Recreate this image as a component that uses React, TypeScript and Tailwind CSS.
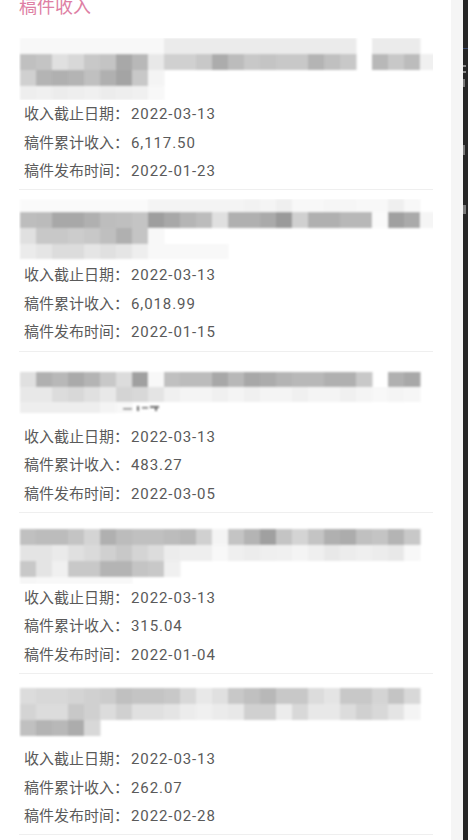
import React from 'react'

type MosaicRow = { y: number; h: number; c: string }

interface ArticleIncome {
    id: number
    mosaic: MosaicRow[]
    marks?: { x: number; y: number; w: number; h: number }[]
    deadline: string
    total: string
    published: string
}

const articles: ArticleIncome[] = [
    {
        id: 1,
        mosaic: [
            { y: 0, h: 16, c: 'f8 f8 f8 f8 f8 f8 f8 f8 f8 eb eb eb eb eb eb eb eb eb eb eb eb -- eb eb eb' },
            { y: 16, h: 16, c: 'c0 c4 e0 d8 c8 c4 a8 b8 e8 d0 d0 c8 ac bc c8 c4 c8 c8 b4 c0 c8 -- b8 c8 bc f0' },
            { y: 32, h: 16, c: 'd0 b4 b0 b4 c0 b0 a4 c8 f4' },
            { y: 48, h: 14, c: 'ee f0 ec ee f0 ec ee f0 f8' },
        ],
        deadline: '2022-03-13',
        total: '6,117.50',
        published: '2022-01-23',
    },
    {
        id: 2,
        mosaic: [
            { y: 0, h: 13, c: 'fa fa fa fa fa fa fa fa f4 f4 f4 f4 f4 f4 f2 f4 ef f8 f8 f6 f6 f8 f8 ef f8' },
            { y: 13, h: 16, c: 'bd bb a8 a8 b0 bd bf c4 9e a8 b5 bc e0 b0 b0 aa 9a d0 b0 b0 b8 b8 fa a0 aa f5' },
            { y: 29, h: 16, c: 'e0 c8 c8 cc c8 bf b0 c4 f8' },
            { y: 45, h: 15, c: 'eb e5 dc dc e5 e0 e5 ee f8 f8 f8 f8 f8' },
        ],
        deadline: '2022-03-13',
        total: '6,018.99',
        published: '2022-01-15',
    },
    {
        id: 3,
        mosaic: [
            { y: 11, h: 15, c: 'e0 b0 b8 aa b4 c8 dc a0 f8 c0 bc bc a8 b8 a8 ac b4 b8 b8 b0 b0 c8 -- b0 a8' },
            { y: 26, h: 15, c: 'e8 e8 dc d8 e0 e8 d4 d8 e4 f0 f4 f4 f0 f4 f0 f4 f4 f0 f4 f4 f0 f4 f8 f4 f6' },
            { y: 41, h: 11, c: 'ee ee ee ee ee f4 f8' },
        ],
        marks: [
            { x: 104, y: 47, w: 9, h: 1.5 },
            { x: 118, y: 45, w: 2, h: 5 },
            { x: 123, y: 46, w: 6, h: 1.5 },
            { x: 131, y: 45, w: 9, h: 2 },
            { x: 136, y: 47, w: 2, h: 3 },
        ],
        deadline: '2022-03-13',
        total: '483.27',
        published: '2022-03-05',
    },
    {
        id: 4,
        mosaic: [
            { y: 7, h: 16, c: 'c0 bc bc c4 d4 b0 bc c0 c0 bc b8 d0 f4 c4 b4 a0 c4 d4 c4 b0 ac c0 c4 b4 c8' },
            { y: 23, h: 16, c: 'e4 e4 ea e0 da d0 c8 d4 dc ec ee ee f8 ef ec ef f0 f4 ef e8 ec ef ec e8 f8' },
            { y: 39, h: 16, c: 'c8 e4 f0 c8 c8 b4 b4 c4 c8 f0' },
            { y: 55, h: 7, c: 'f6 f8 f8 f8 f8 f8 f8' },
        ],
        deadline: '2022-03-13',
        total: '315.04',
        published: '2022-01-04',
    },
    {
        id: 5,
        mosaic: [
            { y: 5, h: 16, c: 'dc d8 d8 d4 d0 cc c0 c4 c4 c8 d8 e8 e0 c8 c0 b8 c8 c8 dc e4 c8 c8 d4 c4 d8' },
            { y: 21, h: 16, c: 'd4 dc dc c8 d0 dc d0 e0 e0 e4 ec f0 eb e8 d0 d0 ec d8 e8 e8 dc d0 d8 e4 f4' },
            { y: 37, h: 16, c: 'c0 b4 b8 ac d8' },
        ],
        deadline: '2022-03-13',
        total: '262.07',
        published: '2022-02-28',
    },
]

// pixelated (blurred-out) article title
function Mosaic({ id, rows, marks }: { id: number; rows: MosaicRow[]; marks?: ArticleIncome['marks'] }) {
    return (
        <svg width="414" height="62" viewBox="0 0 414 62" className="block">
            <defs>
                <filter id={`soft-${id}`} x="-5%" y="-20%" width="110%" height="140%">
                    <feGaussianBlur stdDeviation="0.8" />
                </filter>
            </defs>
            <g filter={`url(#soft-${id})`}>
                {rows.map((row) =>
                    row.c.split(' ').map((shade, i) =>
                        shade === '--' ? null : (
                            <rect
                                key={`${row.y}-${i}`}
                                x={1 + i * 16}
                                y={row.y}
                                width={16.5}
                                height={row.h}
                                fill={`#${shade}${shade}${shade}`}
                            />
                        )
                    )
                )}
                {marks?.map((m, i) => (
                    <rect key={`m-${i}`} x={m.x} y={m.y} width={m.w} height={m.h} fill="#6b6b6b" />
                ))}
            </g>
        </svg>
    )
}

function InfoRow({ label, value }: { label: string; value: string }) {
    return (
        <div className="flex pl-[5px] text-[15px] leading-[28.5px] text-[#5a5a5a]">
            <span>{label}：</span>
            <span className="ml-[2px] tracking-[0.9px]">{value}</span>
        </div>
    )
}

function IncomeCard({ article }: { article: ArticleIncome }) {
    return (
        <div className="border-b border-[#efefef] pt-[9px] pb-[3.75px]">
            <Mosaic id={article.id} rows={article.mosaic} marks={article.marks} />
            <InfoRow label="收入截止日期" value={article.deadline} />
            <InfoRow label="稿件累计收入" value={article.total} />
            <InfoRow label="稿件发布时间" value={article.published} />
        </div>
    )
}

export default function App() {
    return (
        <div
            className="flex h-[840px] w-[468px] overflow-hidden bg-white"
            style={{ fontFamily: 'Roboto, "Noto Sans CJK SC", sans-serif' }}
        >
            <div className="w-[451px] shrink-0 px-[19px]">
                <h2 className="-mt-[5px] text-[18px] leading-[24px] font-normal text-[#de7fa4]">稿件收入</h2>
                <div className="mt-[10px] w-[414px]">
                    {articles.map((a) => (
                        <IncomeCard key={a.id} article={a} />
                    ))}
                </div>
            </div>
            <div className="w-[12px] shrink-0 bg-[#f5f5f5]" />
            {/* edge of the neighbouring window */}
            <div className="flex w-[5px] shrink-0 flex-col bg-[#262626]">
                <div className="mt-[48px] h-px w-full bg-[#3a4a6a]" />
                <div className="mt-[16px] h-[2px] w-[3px] bg-[#8a8a8a]" />
                <div className="mt-[4px] h-[2px] w-[3px] bg-[#8a8a8a]" />
                <div className="mt-[6px] h-[8px] w-[2px] bg-[#7a7a7a]" />
                <div className="mt-[58px] h-[10px] w-[2px] bg-[#7a7a7a]" />
                <div className="mt-[50px] h-[9px] w-[3px] bg-[#7a7a7a]" />
            </div>
        </div>
    )
}
